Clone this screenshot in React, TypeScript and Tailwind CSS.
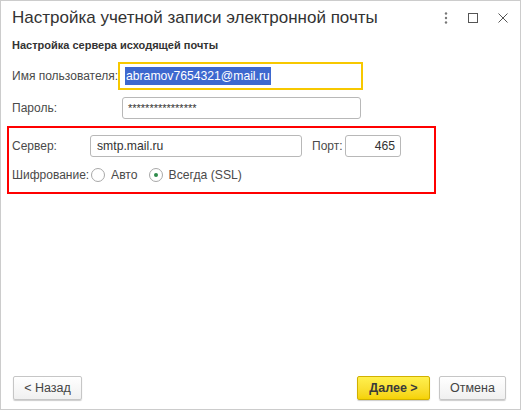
import React from "react";

function Radio({ checked, label }: { checked?: boolean; label: string }) {
  return (
    <label className="flex items-center gap-[6px]">
      <span className="w-[14px] h-[14px] rounded-full border border-[#a8a8a8] bg-white flex items-center justify-center">
        {checked && <span className="w-[4px] h-[4px] rounded-full bg-[#2e8b4a]" />}
      </span>
      <span>{label}</span>
    </label>
  );
}

function Button({ children, primary, className }: { children: React.ReactNode; primary?: boolean; className?: string }) {
  return (
    <button
      className={
        "h-[24px] rounded-[2px] border text-[12.5px] leading-none shadow-[0_1px_1px_rgba(0,0,0,0.2)] " +
        (primary
          ? "border-[#d1b100] bg-gradient-to-b from-[#fff04d] to-[#f5d200] font-bold text-[#3a3a3a] "
          : "border-[#c6c6c6] bg-gradient-to-b from-white to-[#f0f0f0] text-[#444] ") +
        (className ?? "")
      }
    >
      {children}
    </button>
  );
}

export default function App() {
  return (
    <div className="w-[522px] h-[411px] bg-white font-['Liberation_Sans',Arial,sans-serif]">
      <div className="w-[521px] h-[410px] border border-[#cccccc] flex flex-col text-[#4a4a4a] whitespace-nowrap">
        <div className="h-[33px] flex items-center pl-[11px] pr-[12px]">
          <h1 className="text-[17px] text-[#333] flex-1">Настройка учетной записи электронной почты</h1>
          <div className="flex items-center gap-[20px] text-[#666]">
            <svg width="4" height="12" viewBox="0 0 4 12">
              <circle cx="2" cy="1.5" r="1.2" fill="#777" />
              <circle cx="2" cy="6" r="1.2" fill="#777" />
              <circle cx="2" cy="10.5" r="1.2" fill="#777" />
            </svg>
            <svg width="10" height="10" viewBox="0 0 10 10">
              <rect x="0.5" y="0.5" width="9" height="9" fill="none" stroke="#555" strokeWidth="1" />
            </svg>
            <svg width="10" height="10" viewBox="0 0 10 10">
              <path d="M0.5 0.5L9.5 9.5M9.5 0.5L0.5 9.5" stroke="#555" strokeWidth="1" />
            </svg>
          </div>
        </div>

        <div className="pl-[11px] mt-[4px] text-[11px] leading-[14px] font-bold text-[#333]">
          Настройка сервера исходящей почты
        </div>

        <div className="mt-[10px] flex items-center h-[28px] pl-[11px] text-[12px]">
          <span className="w-[106px]">Имя пользователя:</span>
          <div className="w-[245px] h-[28px] border-2 border-[#f7c800] flex items-center pl-[5px] text-[12.2px]">
            <span className="bg-[#3d68cf] text-white leading-[18px] px-[1px]">abramov7654321@mail.ru</span>
          </div>
        </div>

        <div className="mt-[7px] flex items-center h-[22px] pl-[11px] text-[12px]">
          <span className="w-[110px]">Пароль:</span>
          <div className="w-[239px] h-[22px] border border-[#b8b8b8] rounded-[3px] flex items-center pl-[5px] text-[11px] text-[#333]">
            ****************
          </div>
        </div>

        <div className="mt-[7px] ml-[6px] w-[429px] h-[68px] border-2 border-[#ff0000] pt-[7px] pl-[3px] text-[12px] flex flex-col gap-[7px]">
          <div className="flex items-center h-[22px]">
            <span className="w-[78px]">Сервер:</span>
            <div className="w-[212px] h-[22px] border border-[#b8b8b8] rounded-[3px] flex items-center pl-[6px] text-[#333] text-[12.2px]">
              smtp.mail.ru
            </div>
            <span className="ml-[10px] w-[33px]">Порт:</span>
            <div className="w-[56px] h-[22px] border border-[#b8b8b8] rounded-[3px] flex items-center justify-end pr-[5px] text-[#333] text-[12.2px]">
              465
            </div>
          </div>
          <div className="flex items-center h-[22px]">
            <span className="w-[79px]">Шифрование:</span>
            <div className="flex items-center gap-[11px] text-[12.2px]">
              <Radio label="Авто" />
              <Radio checked label="Всегда (SSL)" />
            </div>
          </div>
        </div>

        <div className="flex-1" />

        <div className="flex items-center pl-[12px] pr-[14px] pb-[9px]">
          <Button className="w-[69px]">&lt; Назад</Button>
          <div className="flex-1" />
          <Button primary className="w-[73px]">Далее &gt;</Button>
          <Button className="w-[67px] ml-[9px]">Отмена</Button>
        </div>
      </div>
    </div>
  );
}
